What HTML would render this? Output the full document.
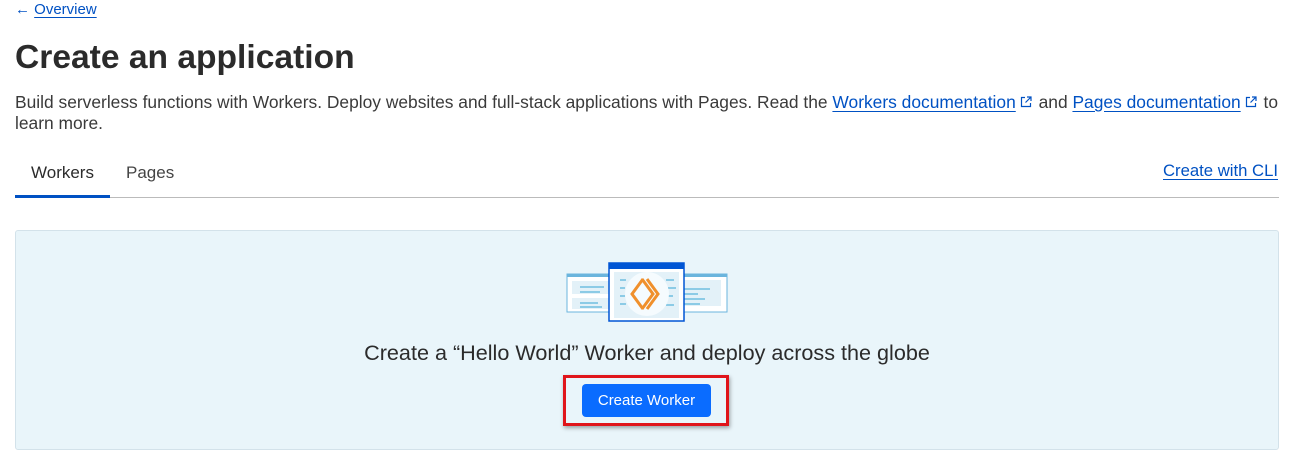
<!DOCTYPE html>
<html><head><meta charset="utf-8"><style>
*{margin:0;padding:0;box-sizing:border-box}
body{width:1290px;height:453px;background:#fff;font-family:"Liberation Sans",sans-serif;color:#313131;position:relative;overflow:hidden}
a{color:#0051c3;text-decoration:underline;text-underline-offset:3px}
.abs{position:absolute;white-space:nowrap}
.ext{display:inline-block;vertical-align:0px;margin:0 2px 0 4px}
</style></head><body>
<div class="abs" style="left:15px;top:1px;font-size:15px;color:#0051c3">← <a>Overview</a></div>
<div class="abs" style="left:15px;top:39px;font-size:33.6px;font-weight:bold;color:#2b2b2b">Create an application</div>
<div class="abs" style="left:15px;top:92px;font-size:17.4px;line-height:21px;color:#3a3a3a">Build serverless functions with Workers. Deploy websites and full-stack applications with Pages. Read the <a>Workers documentation</a><svg class="ext" width="12" height="12" viewBox="0 0 12 12"><path d="M5 1.5H1.5v9h9V7M7 1h4v4M11 1L5.5 6.5" fill="none" stroke="#0051c3" stroke-width="1.2"/></svg> and <a>Pages documentation</a><svg class="ext" width="12" height="12" viewBox="0 0 12 12"><path d="M5 1.5H1.5v9h9V7M7 1h4v4M11 1L5.5 6.5" fill="none" stroke="#0051c3" stroke-width="1.2"/></svg> to<br>learn more.</div>
<div class="abs" style="left:31px;top:163px;font-size:17px;color:#2b2b2b">Workers</div>
<div class="abs" style="left:126px;top:163px;font-size:17px;color:#444">Pages</div>
<div class="abs" style="left:1163px;top:161px;font-size:16.7px"><a>Create with CLI</a></div>
<div class="abs" style="left:15px;top:197px;width:1264px;height:1px;background:#bbb"></div>
<div class="abs" style="left:15px;top:195px;width:95px;height:3px;background:#0051c3"></div>
<div class="abs" style="left:15px;top:230px;width:1264px;height:220px;background:#e9f5fa;border:1px solid #d3e2ea;border-radius:3px"></div>
<svg class="abs" style="left:566px;top:262px" width="162" height="62" viewBox="0 0 162 62">
<rect x="1" y="12" width="58" height="38" fill="#fff" stroke="#6bb5dd"/><rect x="1" y="12" width="58" height="3" fill="#6bb5dd"/>
<rect x="103" y="12" width="58" height="38" fill="#fff" stroke="#6bb5dd"/><rect x="103" y="12" width="58" height="3" fill="#6bb5dd"/>
<rect x="108" y="18" width="47" height="26" fill="#e3f1f8"/>
<rect x="6" y="19" width="40" height="13" fill="#e3f1f8"/><rect x="6" y="36" width="40" height="11" fill="#e3f1f8"/>
<g fill="#8ccbe6"><rect x="14" y="24" width="24" height="2"/><rect x="14" y="29" width="20" height="2"/><rect x="14" y="40" width="18" height="2"/><rect x="14" y="44" width="22" height="2"/><rect x="114" y="26" width="30" height="2"/><rect x="114" y="31" width="18" height="2"/><rect x="114" y="36" width="25" height="2"/><rect x="114" y="41" width="20" height="2"/></g>
<rect x="43" y="1" width="75" height="58" fill="#fff" stroke="#0055d4" stroke-width="1.5"/><rect x="43" y="1" width="75" height="6" fill="#0055d4"/>
<rect x="48" y="10" width="65" height="46" fill="#e3f1f8"/>
<g fill="#8ccbe6"><rect x="54" y="17" width="6" height="2"/><rect x="54" y="25" width="5" height="2"/><rect x="54" y="33" width="5" height="2"/><rect x="54" y="41" width="6" height="2"/><rect x="100" y="17" width="8" height="2"/><rect x="102" y="25" width="8" height="2"/><rect x="102" y="33" width="5" height="2"/><rect x="100" y="42" width="8" height="2"/></g>
<circle cx="81" cy="32" r="22" fill="#f5fbfe"/>
<path d="M77 17 L66 32 L77 47 M76 17 L87 32 L76 47 M81 17 L92 32 L81 47" fill="none" stroke="#f0902c" stroke-width="3"/>
</svg>
<div class="abs" style="left:0;width:1294px;text-align:center;top:340px;font-size:21.6px;color:#2b2b2b">Create a “Hello World” Worker and deploy across the globe</div>
<div class="abs" style="left:563px;top:375px;width:166px;height:51px;border:3px solid #e0141a;box-shadow:1px 2px 4px rgba(0,0,0,.35)"></div>
<div class="abs" style="left:582px;top:384px;width:129px;height:33px;background:#0a6cff;border-radius:4px;color:#fff;font-size:15px;text-align:center;line-height:33px">Create Worker</div>
</body></html>
